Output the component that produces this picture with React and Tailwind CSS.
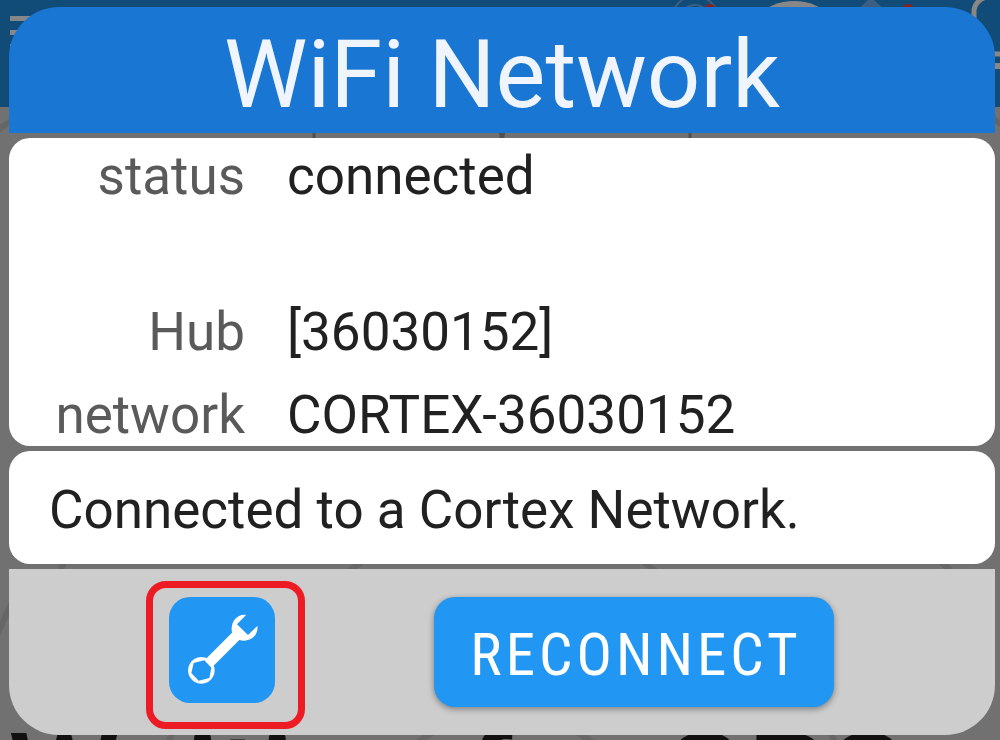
const details = [
  { label: "status", value: "connected", row: "pt-[7px]" },
  { label: "Hub", value: "[36030152]", row: "pt-[94px]" },
  { label: "network", value: "CORTEX-36030152", row: "pt-[21px]" },
];

function WrenchIcon() {
  return (
    <svg viewBox="117 81 318 318" className="w-full h-full" fill="white" aria-hidden="true">
      <path
        fillRule="evenodd"
        d="M214 261a40 40 0 1 0 0.1 0ZM191 279L223 271L244 293L238 324L206 332L184 309Z"
      />
      <path d="M228 266L306 188C300 158 320 131 348 135L321 163L354 195L382 168C386 198 358 219 328 210L250 288Z" />
    </svg>
  );
}

function Backdrop() {
  return (
    <div className="absolute inset-0 overflow-hidden bg-[#717171]" aria-hidden="true">
      <div className="flex justify-between h-[107px] bg-[#114b78]">
        <svg width="120" height="107" fill="#878787">
          <path d="M10 16h60v5h-60zM10 30h60v5h-60zM10 44h60v5h-60z" />
        </svg>
        <svg width="340" height="107" fill="none">
          <circle cx="35" cy="19" r="23" stroke="#3b5f80" strokeWidth="2" />
          <circle cx="35" cy="19" r="14" stroke="#3b5f80" strokeWidth="2" />
          <circle cx="50" cy="10" r="6" fill="#8b1e22" />
          <circle cx="134" cy="56" r="55" fill="#878787" />
          <path d="M211 -3L235 20H187Z" fill="#3b5f80" />
          <circle cx="248" cy="10" r="6" fill="#8b1e22" />
          <rect x="314" y="-3" width="60" height="57" rx="15" stroke="#878787" strokeWidth="5" />
          <path d="M320 66h30" stroke="#878787" strokeWidth="6" />
        </svg>
      </div>
      <svg width="100%" height="633" fill="none" stroke="#666666" strokeWidth="6">
        <path d="M-4 24L14 12M990 10L1004 19M-4 530L12 495M54 476L66 452M335 474L366 452M640 452L668 474M935 450L950 463M176 618L166 640M438 622L410 640M572 622L600 640M828 622L838 640" />
        <path d="M314 20v20M690 20v20" stroke="#505050" strokeWidth="3" />
        <path d="M499 26h6l-1 8h-4z" fill="#505050" stroke="none" />
      </svg>
    </div>
  );
}

export default function App() {
  return (
    <div className="relative min-h-screen overflow-hidden font-['Roboto',sans-serif]">
      <Backdrop />
      <p
        className="absolute left-2 top-[706px] whitespace-nowrap text-[127px] leading-[148px] font-medium text-[#111111]"
        aria-hidden="true"
      >
        Waiting for GPS
      </p>

      <main
        role="dialog"
        aria-labelledby="dialog-title"
        className="relative flex flex-col gap-[5px] pt-[7px] pl-[9px] pr-[5px] pb-[5px] text-[53px] leading-[62px] text-[#212121]"
      >
        <header className="rounded-t-[50px] bg-[#1976d2] pt-[13px] pb-[3px] text-center">
          <h1 id="dialog-title" className="text-[94px] leading-[110px] text-[#f0f5fd]">
            WiFi Network
          </h1>
        </header>

        <dl className="rounded-[21px] bg-white">
          {details.map((item) => (
            <div key={item.label} className={`flex gap-[42px] ${item.row}`}>
              <dt className="w-[236px] shrink-0 text-right text-[#5a5a5a]">{item.label}</dt>
              <dd>{item.value}</dd>
            </div>
          ))}
        </dl>

        <section className="rounded-[21px] bg-white pt-7 pb-[23px] px-10">
          <p>Connected to a Cortex Network.</p>
        </section>

        <footer className="flex items-start gap-[129px] rounded-b-[50px] bg-[#cdcdcd] pt-3 pb-1.5 pl-[137px]">
          <div className="rounded-[20px] border-[7px] border-[#ed1c24] pt-[9px] pr-[23px] pb-[19px] pl-4">
            <button type="button" aria-label="Settings" className="block w-[106px] h-[106px] rounded-[21px] bg-[#2196f3]">
              <WrenchIcon />
            </button>
          </div>
          <button
            type="button"
            className="mt-4 w-[400px] h-[110px] pt-1.5 pl-1 rounded-[21px] bg-[#2196f3] text-center text-[59px] tracking-[4px] text-white shadow-[0_2px_6px_rgba(0,0,0,0.4)] font-['Roboto_Condensed','Liberation_Sans_Narrow',sans-serif]"
          >
            RECONNECT
          </button>
        </footer>
      </main>
    </div>
  );
}
